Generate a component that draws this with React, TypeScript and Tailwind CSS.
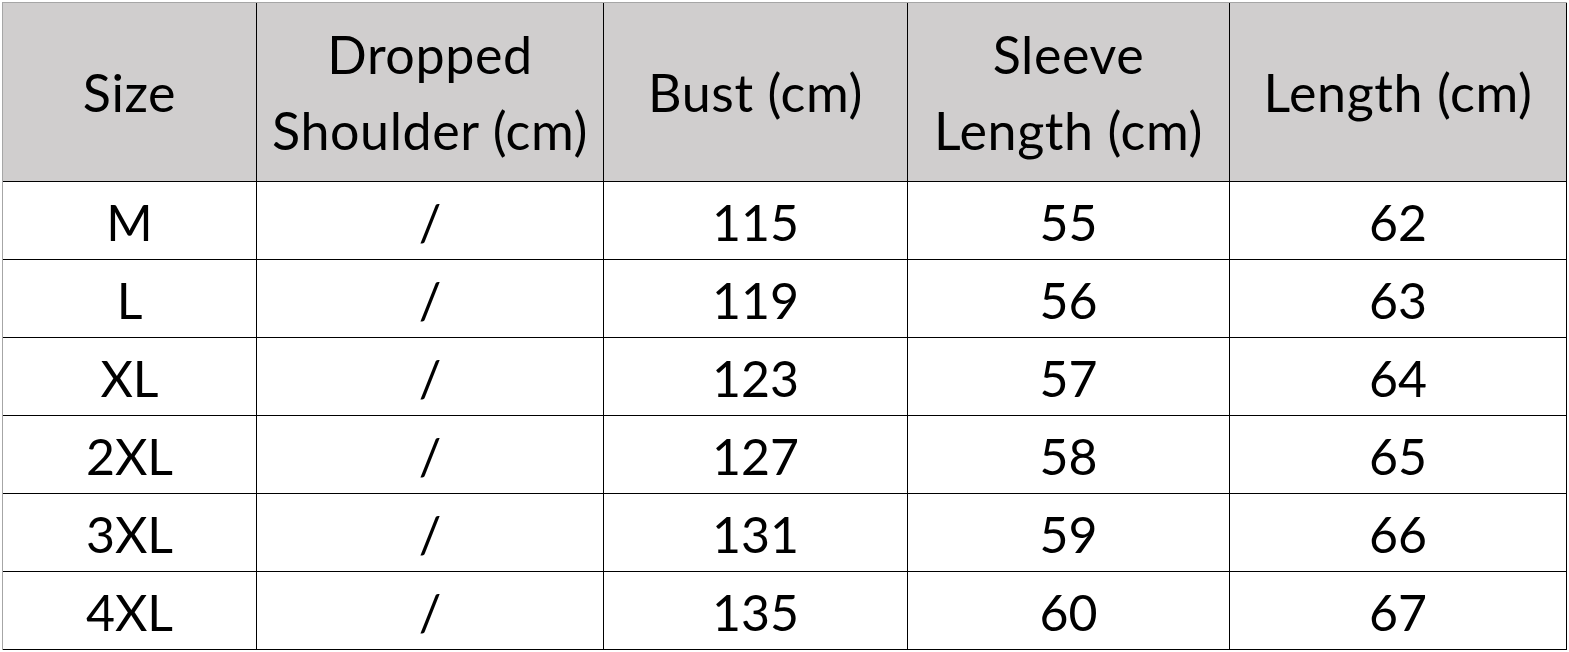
import React from "react";

const headers: string[][] = [
  ["Size"],
  ["Dropped", "Shoulder (cm)"],
  ["Bust (cm)"],
  ["Sleeve", "Length (cm)"],
  ["Length (cm)"],
];

const rows: string[][] = [
  ["M", "/", "115", "55", "62"],
  ["L", "/", "119", "56", "63"],
  ["XL", "/", "123", "57", "64"],
  ["2XL", "/", "127", "58", "65"],
  ["3XL", "/", "131", "59", "66"],
  ["4XL", "/", "135", "60", "67"],
];

export default function App() {
  return (
    <div
      className="w-[1569px] h-[652px] bg-white pt-[2px] pl-[2px] overflow-hidden text-black"
      style={{ fontFamily: "Lato, 'Open Sans', sans-serif" }}
    >
      <div className="grid grid-cols-[254px_347px_304px_322px_337px] w-fit border-t border-l border-[#a6a6a6]">
        {headers.map((h, i) => (
          <div
            key={"h" + i}
            className="h-[179px] bg-[#d0cece] border-r border-b border-black flex flex-col items-center justify-center text-[52px] tracking-[0.6px] leading-[76px]"
          >
            {h.map((line, j) => (
              <span key={j} className="whitespace-nowrap">
                {line}
              </span>
            ))}
          </div>
        ))}
        {rows.map((r, ri) =>
          r.map((c, ci) => (
            <div
              key={ri + "-" + ci}
              className="h-[78px] border-r border-b border-black flex items-center justify-center text-[50px] leading-none pt-[2px]"
            >
              {c}
            </div>
          ))
        )}
      </div>
    </div>
  );
}
